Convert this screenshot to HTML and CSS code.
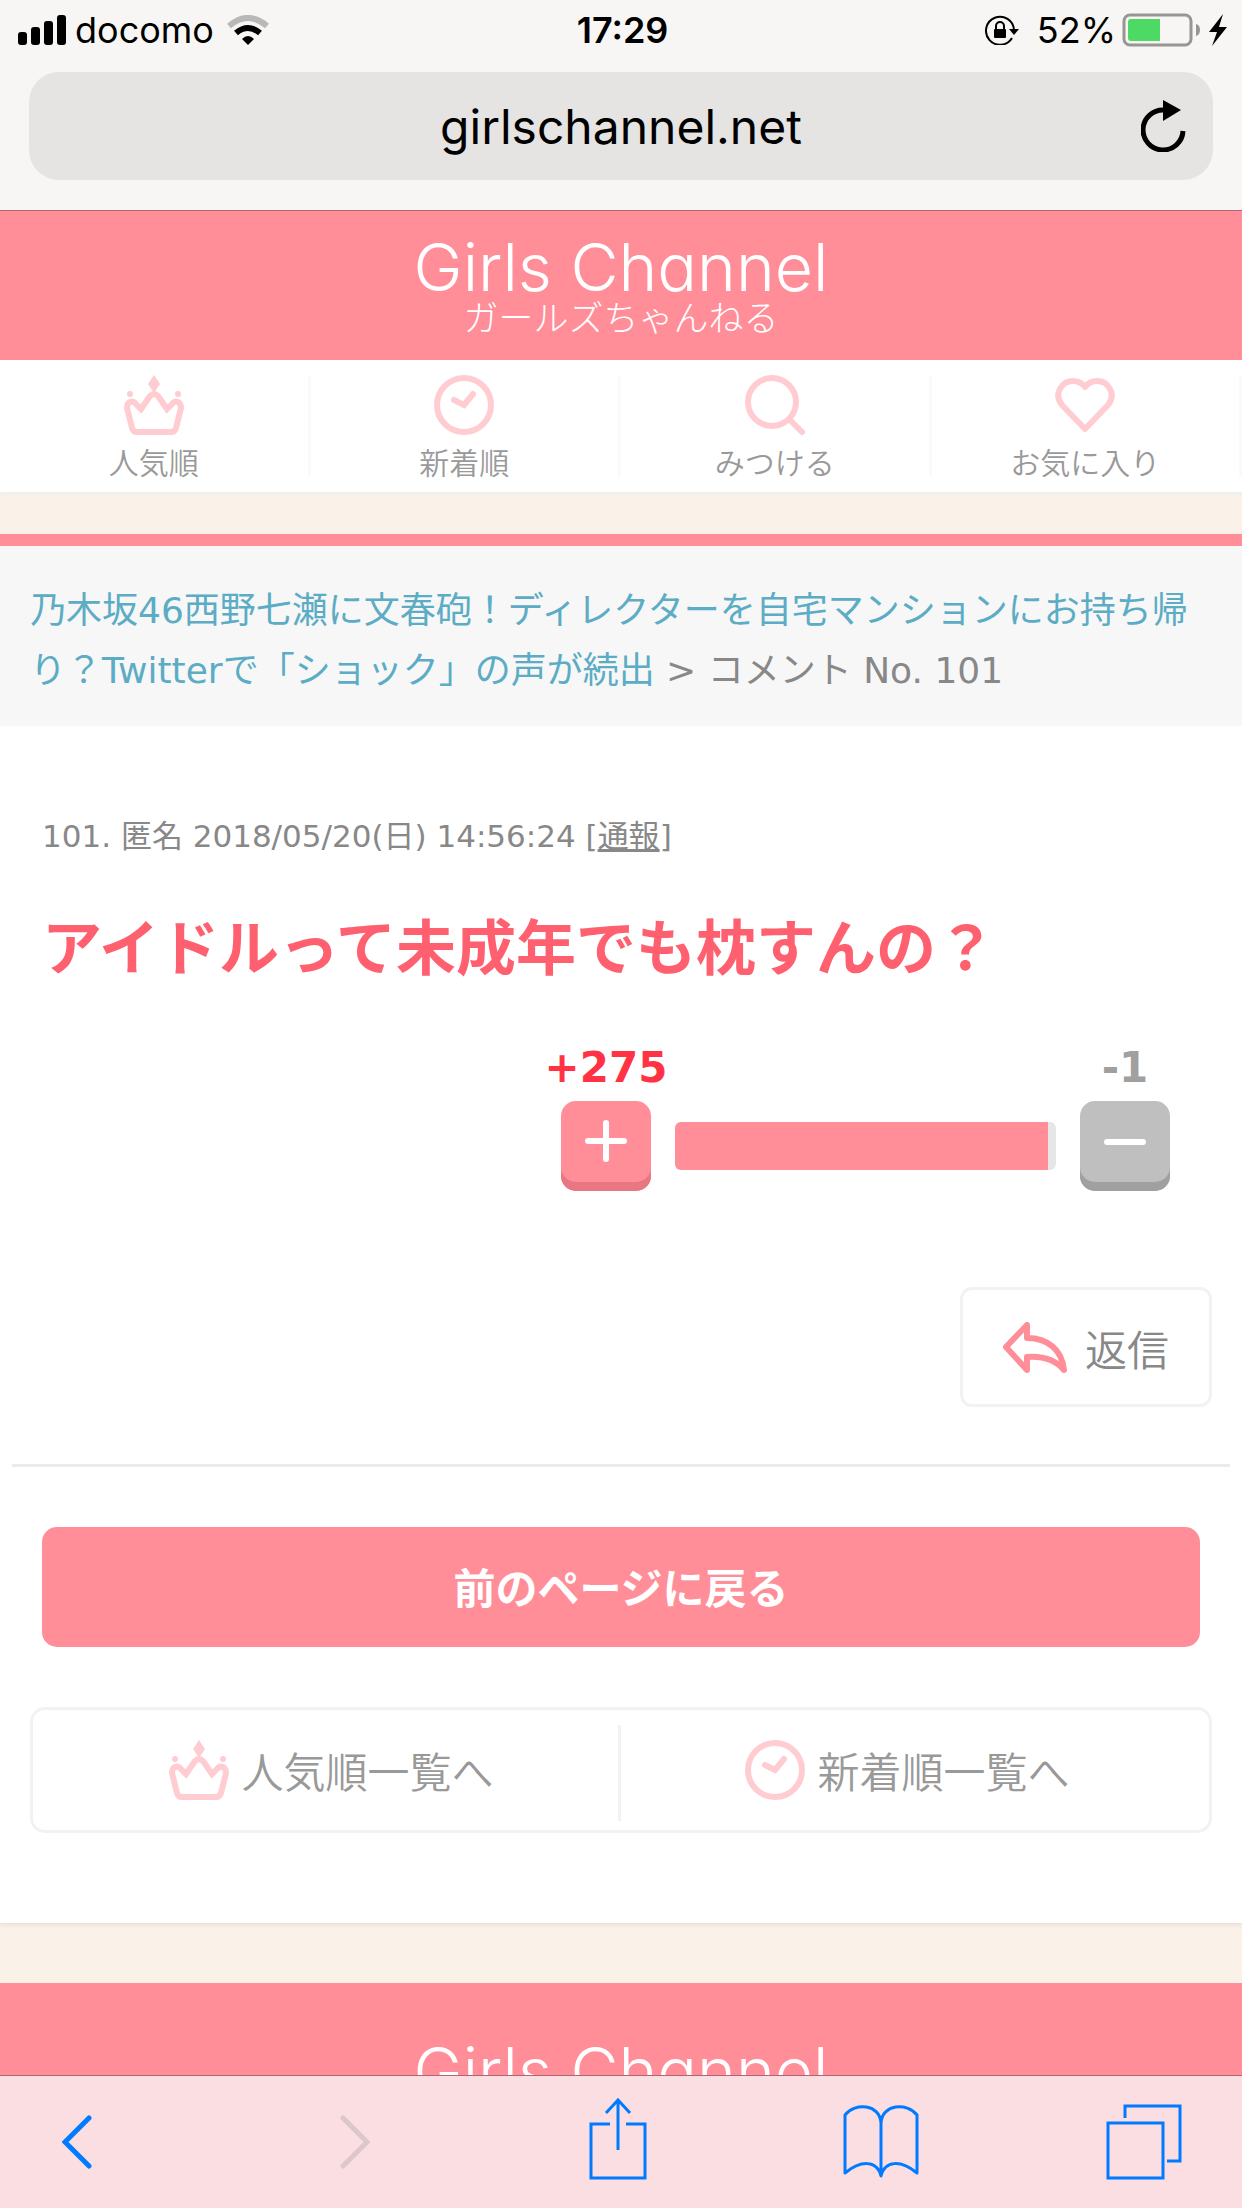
FILE: index.html
```
<!DOCTYPE html>
<html lang="ja">
<head>
<meta charset="UTF-8">
<meta name="viewport" content="width=device-width, initial-scale=1.0">
<title>Girls Channel - コメント No. 101</title>
<link rel="stylesheet" href="styles.css">
</head>
<body>

<!-- shared icons -->
<svg class="defs" width="0" height="0" aria-hidden="true">
  <symbol id="crown" viewBox="0 0 60 60">
    <path d="M30 0L36 9L30 18L24 9Z" fill="currentColor"/>
    <circle cx="6" cy="19" r="3" fill="currentColor"/>
    <circle cx="54" cy="19" r="3" fill="currentColor"/>
    <path d="M8 53L3 33C3 26 9 25 12 29L17 34L26 21Q30 17 34 21L43 34L48 29C51 25 57 26 57 33L52 53Q51 57 47 57H13Q9 57 8 53Z" fill="none" stroke="currentColor" stroke-width="6"/>
  </symbol>
  <symbol id="clock" viewBox="0 0 60 60">
    <g fill="none" stroke="currentColor" stroke-width="6" stroke-linecap="round">
      <circle cx="30" cy="30" r="27"/>
      <path d="M20 25L30 30L39 19"/>
    </g>
  </symbol>
</svg>

<div class="browser">
  <div class="status">
    <div class="status-left">
      <svg width="48" height="30" viewBox="0 0 48 30">
        <rect x="0" y="17" width="9" height="13" rx="3"/>
        <rect x="13" y="12" width="9" height="18" rx="3"/>
        <rect x="26" y="6" width="9" height="24" rx="3"/>
        <rect x="39" y="0" width="9" height="30" rx="3"/>
      </svg>
      <span class="carrier">docomo</span>
      <svg width="42" height="30" viewBox="0 0 42 30">
        <path d="M2 11Q21 -5 40 11" fill="none" stroke="#b9b8b8" stroke-width="6"/>
        <path d="M9 18Q21 8 33 18" fill="none" stroke="#000" stroke-width="6"/>
        <path d="M15 24Q21 18 27 24L21 30Z"/>
      </svg>
    </div>
    <div class="time">17:29</div>
    <div class="status-right">
      <svg width="34" height="30" viewBox="0 0 34 30">
        <path d="M27 23A14 14 0 1 1 29 15" fill="none" stroke="#000" stroke-width="2"/>
        <path d="M24 14H34L29 20Z"/>
        <rect x="9" y="14" width="12" height="9" rx="1"/>
        <path d="M11 15V11A4 4 0 0 1 19 11V15" fill="none" stroke="#000" stroke-width="2"/>
      </svg>
      <span class="percent">52%</span>
      <svg width="79" height="34" viewBox="0 0 79 34">
        <rect x="2" y="2" width="67" height="30" rx="6" fill="none" stroke="#979693" stroke-width="3"/>
        <path d="M9 6H38V28H9Q6 28 6 25V9Q6 6 9 6Z" fill="#4cd964"/>
        <path d="M74 11Q78 12 78 17Q78 22 74 23Z" fill="#979693"/>
      </svg>
      <svg class="bolt" width="18" height="32" viewBox="0 0 18 32">
        <path d="M14 0L0 18H8L3 32L18 13H10Z"/>
      </svg>
    </div>
  </div>
  <div class="address">
    <input type="text" value="girlschannel.net" aria-label="Address">
    <button class="reload" aria-label="Reload">
      <svg width="46" height="52" viewBox="0 0 46 52">
        <path d="M42 31A20 20 0 1 1 23 10" fill="none" stroke="#000" stroke-width="5"/>
        <path d="M22 0L40 10L22 21Z"/>
      </svg>
    </button>
  </div>
</div>

<header class="site-header">
  <a href="#" class="logo">
    <span class="logo-en">Girls Channel</span>
    <span class="logo-ja">ガールズちゃんねる</span>
  </a>
</header>

<nav class="menu">
  <a href="#">
    <svg width="60" height="60"><use href="#crown"/></svg>
    <span>人気順</span>
  </a>
  <a href="#">
    <svg width="60" height="60"><use href="#clock"/></svg>
    <span>新着順</span>
  </a>
  <a href="#">
    <svg width="60" height="60" viewBox="0 0 60 60" fill="none" stroke="currentColor" stroke-width="6" stroke-linecap="round">
      <circle cx="27" cy="27" r="24"/>
      <path d="M45 45L57 57"/>
    </svg>
    <span>みつける</span>
  </a>
  <a href="#">
    <svg width="60" height="60" viewBox="0 0 60 60" fill="none" stroke="currentColor" stroke-width="6" stroke-linejoin="round">
      <path d="M30 54L7 30C-2 19 7 6 18 6C23 6 27 8 30 12C33 8 37 6 42 6C53 6 62 19 53 30Z"/>
    </svg>
    <span>お気に入り</span>
  </a>
</nav>

<main class="main">
  <h1 class="topic"><a href="#">乃木坂46西野七瀬に文春砲！ディレクターを自宅マンションにお持ち帰り？Twitterで「ショック」の声が続出</a> &gt; コメント No. 101</h1>

  <article class="comment">
    <p class="info">101. 匿名 2018/05/20(日) 14:56:24 [<a href="#">通報</a>]</p>
    <p class="body">アイドルって未成年でも枕すんの？</p>

    <div class="votes">
      <div class="vote plus">
        <span>+275</span>
        <button aria-label="プラス">
          <svg width="42" height="42" viewBox="0 0 42 42"><path d="M3 21H39M21 3V39"/></svg>
        </button>
      </div>
      <div class="graph"><div class="graph-fill"></div></div>
      <div class="vote minus">
        <span>-1</span>
        <button aria-label="マイナス">
          <svg width="42" height="42" viewBox="0 0 42 42"><path d="M3 22H39"/></svg>
        </button>
      </div>
    </div>

    <button class="reply">
      <svg width="64" height="51" viewBox="0 0 64 51">
        <path d="M3 25L24 3V16C45 16 59 28 61 48C51 36 38 34 24 35V48Z" fill="none" stroke="#ff8e99" stroke-width="6" stroke-linejoin="round"/>
      </svg>
      返信
    </button>
  </article>

  <a href="#" class="back">前のページに戻る</a>

  <div class="lists">
    <a href="#"><svg width="60" height="60"><use href="#crown"/></svg><span>人気順一覧へ</span></a>
    <a href="#"><svg width="60" height="60"><use href="#clock"/></svg><span>新着順一覧へ</span></a>
  </div>
</main>

<footer class="site-footer">
  <a href="#" class="logo">
    <span class="logo-en">Girls Channel</span>
    <span class="logo-ja">ガールズちゃんねる</span>
  </a>
</footer>

<div class="toolbar">
  <button class="prev" aria-label="Back">
    <svg width="30" height="54" viewBox="0 0 30 54" stroke-linecap="round"><path d="M27 3L3 27L27 51"/></svg>
  </button>
  <button class="next" aria-label="Forward" disabled>
    <svg width="30" height="54" viewBox="0 0 30 54" stroke-linecap="round"><path d="M3 3L27 27L3 51"/></svg>
  </button>
  <button aria-label="Share">
    <svg width="58" height="88" viewBox="0 0 58 88"><path d="M21 26H2V80H56V26H37M29 52V2M17 15L29 2L41 15"/></svg>
  </button>
  <button aria-label="Bookmarks">
    <svg width="76" height="74" viewBox="0 0 76 74" stroke-linejoin="round"><path d="M38 71V18C37 -1 12 -3 2 10V68C18 55 34 55 38 71C42 55 58 55 74 68V10C64 -3 39 -1 38 18"/></svg>
  </button>
  <button aria-label="Tabs">
    <svg width="76" height="76" viewBox="0 0 76 76"><path d="M2 19H57V74H2ZM19 14V2H74V57H61"/></svg>
  </button>
</div>

</body>
</html>
```

FILE: styles.css
```
* {
  box-sizing: border-box;
}

body {
  margin: 0;
  background-color: #faf1e8;
  color: #888;
  font-family: "DejaVu Sans", "Noto Sans CJK JP", sans-serif;
}

h1, p {
  margin: 0;
  font-weight: normal;
}

a {
  color: inherit;
  text-decoration: none;
}

button {
  border: none;
  padding: 0;
  background: none;
  font-family: inherit;
}

svg {
  display: block;
}

.defs {
  position: absolute;
}

/* browser bar */
.browser {
  background-color: #f7f6f4;
  border-bottom: 1px solid #b06570;
  padding-bottom: 30px;
  color: #000;
  font-family: Inter, sans-serif;
}

.status {
  display: grid;
  grid-template-columns: 1fr auto 1fr;
  align-items: center;
  height: 60px;
  padding: 0 15px 0 18px;
  font-size: 36px;
}

.status-left, .status-right {
  display: flex;
  align-items: center;
}

.status-right {
  justify-content: flex-end;
}

.carrier {
  margin: 0 13px 0 9px;
}

.time {
  font-weight: 600;
}

.percent {
  margin: 0 6px 0 18px;
}

.bolt {
  margin-left: 8px;
}

.address {
  display: flex;
  align-items: center;
  height: 108px;
  margin: 12px 29px 0;
  padding: 0 26px 0 72px;
  border-radius: 30px;
  background-color: #e5e4e2;
}

.address input {
  flex: 1;
  min-width: 0;
  border: none;
  padding: 0;
  background: none;
  color: #000;
  font-family: inherit;
  font-size: 48px;
  text-align: center;
}

/* header */
.site-header, .site-footer {
  background-color: #ff8e99;
}

.site-header {
  height: 149px;
  padding-top: 24px;
}

.logo {
  display: flex;
  flex-direction: column;
  align-items: center;
  color: #fff;
}

.logo-en {
  font-family: Inter, sans-serif;
  font-size: 66px;
  font-weight: 300;
  font-feature-settings: "cv11";
  line-height: 64px;
}

.logo-ja {
  font-family: "Noto Sans CJK JP", sans-serif;
  font-size: 35px;
  font-weight: 300;
  line-height: 34px;
}

.menu {
  display: flex;
  padding: 15px 0;
  background-color: #fff;
  box-shadow: 0 3px 3px #f0efed;
}

.menu a {
  flex: 1;
  display: flex;
  flex-direction: column;
  align-items: center;
  border-right: 3px solid #fafafa;
  color: #ffccd1;
}

.menu span {
  margin-top: 10px;
  color: #999;
  font-family: "Noto Sans CJK JP", sans-serif;
  font-size: 30px;
  font-weight: 350;
  line-height: 32px;
}

/* content */
.main {
  margin-top: 42px;
  padding-bottom: 90px;
  border-top: 12px solid #ff8e99;
  background-color: #fff;
  box-shadow: 0 2px 4px #e6dfd8;
}

.topic {
  padding: 35px 30px 25px;
  background-color: #f7f7f7;
  font-size: 36px;
  line-height: 60px;
}

.topic a {
  color: #5bacc4;
}

.comment {
  margin: 0 12px;
  padding: 86px 18px 57px 30px;
  border-bottom: 3px solid #ebebeb;
}

.info {
  font-size: 31px;
  line-height: 48px;
}

.info a {
  text-decoration: underline;
}

.comment .body {
  margin-top: 44px;
  color: #ff6070;
  font-size: 60px;
  font-weight: bold;
  line-height: 90px;
}

.votes {
  display: flex;
  justify-content: flex-end;
  align-items: flex-end;
  margin: 50px 24px 0 0;
}

.vote {
  display: flex;
  flex-direction: column;
  align-items: center;
  width: 126px;
  font-size: 42px;
  font-weight: bold;
  line-height: 48px;
}

.vote button {
  display: flex;
  justify-content: center;
  width: 90px;
  height: 90px;
  margin-top: 9px;
  padding-top: 19px;
  border-radius: 15px;
}

.vote path {
  stroke: #fff;
  stroke-width: 6px;
  stroke-linecap: round;
}

.plus {
  color: #ff3344;
}

.plus button {
  background-color: #ff8e99;
  box-shadow: inset 0 -9px #e97683;
}

.minus {
  color: #a0a0a0;
}

.minus button {
  background-color: #bfbfbf;
  box-shadow: inset 0 -9px #a0a0a0;
}

.graph {
  width: 381px;
  height: 48px;
  margin: 0 6px 21px;
  border-radius: 6px;
  background-color: #e6e6e6;
  overflow: hidden;
}

.graph-fill {
  width: 98%;
  height: 100%;
  background-color: #ff8e99;
}

.reply {
  display: flex;
  align-items: center;
  justify-content: center;
  gap: 18px;
  width: 252px;
  height: 120px;
  margin: 96px 0 0 auto;
  border: 3px solid #f2f2f2;
  border-radius: 12px;
  color: #888;
  font-family: "Noto Sans CJK JP", sans-serif;
  font-size: 42px;
  font-weight: 350;
}

.back {
  display: block;
  margin: 60px 42px;
  padding-top: 6px;
  border-radius: 15px;
  background-color: #ff8e99;
  color: #fff;
  font-size: 42px;
  font-weight: bold;
  line-height: 114px;
  text-align: center;
}

.lists {
  display: flex;
  margin: 0 30px;
  padding: 15px 15px 9px 12px;
  border: 3px solid #f2f2f2;
  border-radius: 15px;
  color: #999;
  font-family: "Noto Sans CJK JP", sans-serif;
  font-size: 42px;
  font-weight: 350;
  line-height: 60px;
}

.lists a {
  flex: 1;
  display: flex;
  justify-content: center;
  gap: 12px;
  padding: 15px 0 21px;
}

.lists a:first-child {
  border-right: 3px solid #f2f2f2;
}

.lists svg {
  color: #ffccd1;
}

.site-footer {
  margin-top: 60px;
  padding: 56px 0 60px;
}

/* bottom toolbar */
.toolbar {
  position: fixed;
  left: 0;
  right: 0;
  bottom: 0;
  display: flex;
  justify-content: space-between;
  height: 133px;
  padding: 0 58px 0 52px;
  border-top: 1px solid #b06570;
  background-color: #fadee2;
}

.toolbar button {
  display: flex;
  align-items: center;
  justify-content: center;
  width: 80px;
}

.toolbar .prev {
  justify-content: flex-start;
  padding-left: 10px;
}

.toolbar path {
  fill: none;
  stroke: #007aff;
}

.toolbar svg {
  stroke-width: 3px;
}

.toolbar .prev svg, .toolbar .next svg {
  stroke-width: 5px;
}

.toolbar .next path {
  stroke: #dcc8cc;
}
```
